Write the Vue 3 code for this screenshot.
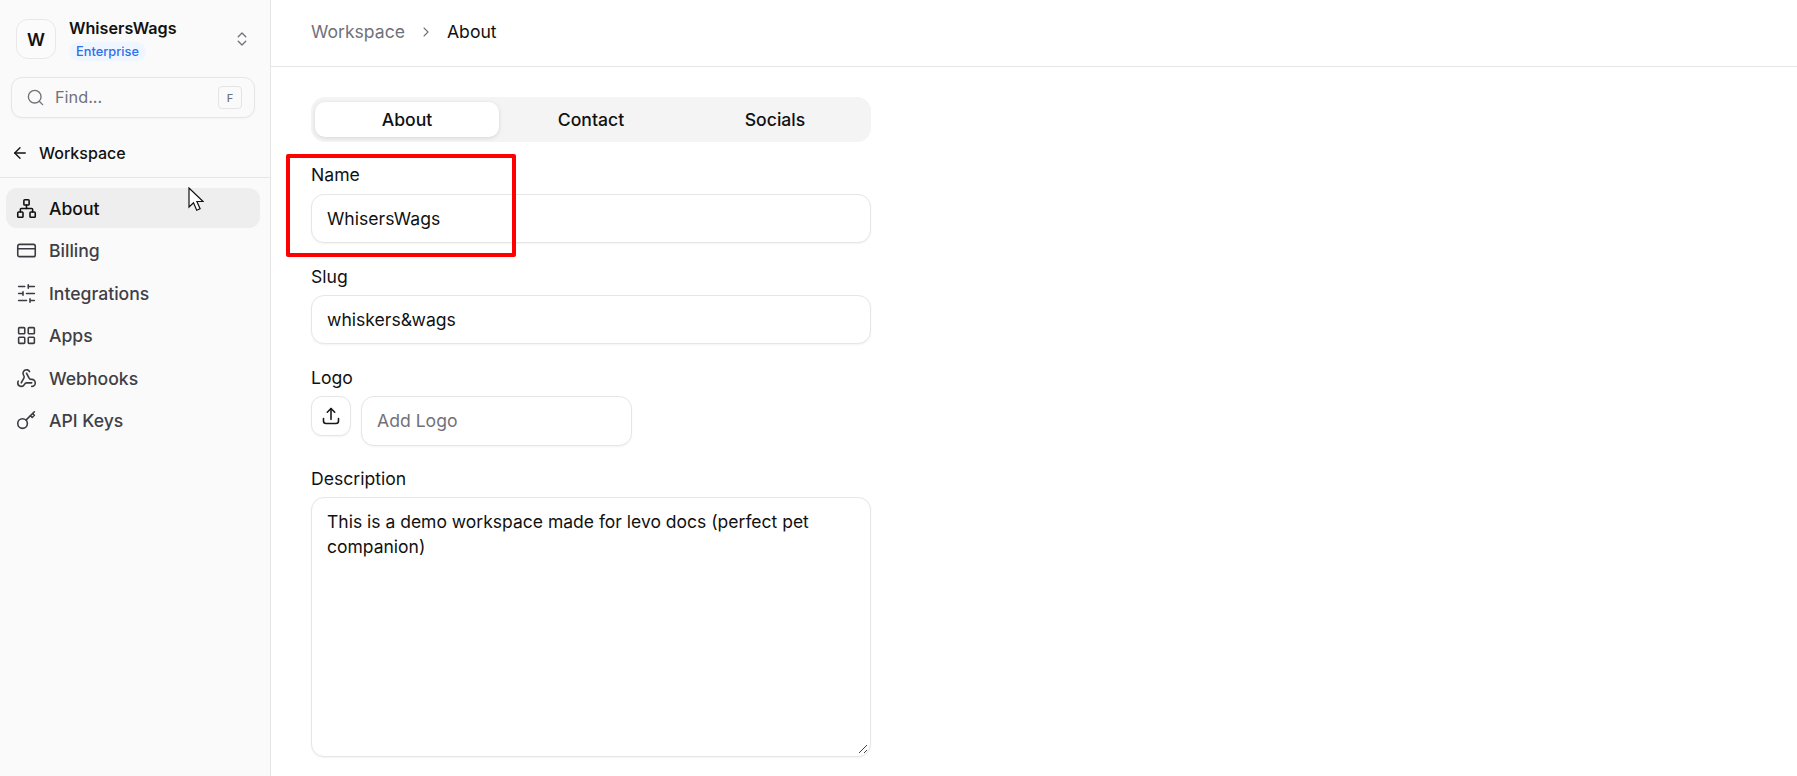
<script setup>
const nav = [
  { label: 'About', icon: 'network', active: true },
  { label: 'Billing', icon: 'card' },
  { label: 'Integrations', icon: 'sliders' },
  { label: 'Apps', icon: 'grid' },
  { label: 'Webhooks', icon: 'webhook' },
  { label: 'API Keys', icon: 'key' },
]
const tabs = ['About', 'Contact', 'Socials']
</script>

<template>
  <div class="app">
    <aside class="sidebar">
      <div class="account">
        <div class="avatar">W</div>
        <div class="account-text">
          <div class="account-name">WhisersWags</div>
          <span class="badge">Enterprise</span>
        </div>
        <svg class="updown" viewBox="0 0 24 24"><path d="m7 15 5 5 5-5" /><path d="m7 9 5-5 5 5" /></svg>
      </div>
      <div class="search">
        <svg class="search-icon" viewBox="0 0 24 24"><circle cx="11" cy="11" r="8" /><path d="m21 21-4.3-4.3" /></svg>
        <span class="search-text">Find...</span>
        <kbd class="kbd">F</kbd>
      </div>
      <div class="back">
        <svg class="back-icon" viewBox="0 0 24 24"><path d="m12 19-7-7 7-7" /><path d="M19 12H5" /></svg>
        <span>Workspace</span>
      </div>
      <nav class="nav">
        <div v-for="item in nav" :key="item.label" class="nav-item" :class="{ active: item.active }">
          <svg class="nav-icon" viewBox="0 0 24 24">
            <template v-if="item.icon === 'network'">
              <rect x="16" y="16" width="6" height="6" rx="1" /><rect x="2" y="16" width="6" height="6" rx="1" /><rect x="9" y="2" width="6" height="6" rx="1" />
              <path d="M5 16v-3a1 1 0 0 1 1-1h12a1 1 0 0 1 1 1v3" /><path d="M12 12V8" />
            </template>
            <template v-else-if="item.icon === 'card'">
              <rect x="2" y="5" width="20" height="14" rx="2" /><path d="M2 10h20" />
            </template>
            <template v-else-if="item.icon === 'sliders'">
              <path d="M21 4h-7M10 4H3M21 12h-9M8 12H3M21 20h-5M12 20H3M14 2v4M8 10v4M16 18v4" />
            </template>
            <template v-else-if="item.icon === 'grid'">
              <rect x="3" y="3" width="7" height="7" rx="1" /><rect x="14" y="3" width="7" height="7" rx="1" /><rect x="14" y="14" width="7" height="7" rx="1" /><rect x="3" y="14" width="7" height="7" rx="1" />
            </template>
            <template v-else-if="item.icon === 'webhook'">
              <path d="M18 16.98h-5.99c-1.1 0-1.95.94-2.48 1.9A4 4 0 0 1 2 17c.01-.7.2-1.4.57-2" /><path d="m6 17 3.13-5.78c.53-.97.1-2.18-.5-3.1a4 4 0 1 1 6.89-4.06" /><path d="m12 6 3.13 5.73C15.66 12.7 16.9 13 18 13a4 4 0 0 1 0 8" />
            </template>
            <template v-else>
              <path d="m16.5 6.5 2 2 2.5-2.5-2-2" /><path d="m21 2-9.6 9.6" /><circle cx="7.5" cy="15.5" r="5.5" />
            </template>
          </svg>
          <span>{{ item.label }}</span>
        </div>
      </nav>
    </aside>

    <main class="main">
      <header class="crumbs">
        <span class="crumb-muted">Workspace</span>
        <svg class="crumb-sep" viewBox="0 0 24 24"><path d="m9 18 6-6-6-6" /></svg>
        <span>About</span>
      </header>
      <div class="form">
        <div class="tabs">
          <div v-for="(t, i) in tabs" :key="t" class="tab" :class="{ selected: i === 0 }">{{ t }}</div>
        </div>
        <div class="field name-field">
          <div class="label">Name</div>
          <div class="input">WhisersWags</div>
        </div>
        <div class="field">
          <div class="label">Slug</div>
          <div class="input">whiskers&amp;wags</div>
        </div>
        <div class="field">
          <div class="label">Logo</div>
          <div class="logo-row">
            <div class="upload">
              <svg class="upload-icon" viewBox="0 0 24 24"><path d="M3 15v3a3 3 0 0 0 3 3h12a3 3 0 0 0 3-3v-3" /><path d="M16.5 7.5 12 3 7.5 7.5" /><path d="M12 3v13" /></svg>
            </div>
            <div class="input logo-input">Add Logo</div>
          </div>
        </div>
        <div class="field">
          <div class="label">Description</div>
          <div class="textarea">
            This is a demo workspace made for levo docs (perfect pet companion)
            <svg class="grip" viewBox="0 0 10 10"><path d="M1 9l8-8M6 9l3-3" /></svg>
          </div>
        </div>
      </div>
    </main>

    <div class="highlight"></div>
    <svg class="cursor" viewBox="0 0 16 25">
      <path d="M1 1v19l4.5-4.2 3.2 7.4 3.4-1.5-3.2-7.2h6.2z" />
    </svg>
  </div>
</template>

<style>
html, body { margin: 0; background: #fff; }
</style>

<style scoped>
.app {
  position: relative;
  display: flex;
  width: 1797px;
  height: 776px;
  overflow: hidden;
  font-family: Inter, "Liberation Sans", sans-serif;
  font-size: 17.6px;
  color: #11181c;
  background: #fff;
}
svg { fill: none; stroke: currentColor; stroke-width: 2; stroke-linecap: round; stroke-linejoin: round; flex: none; }

.sidebar {
  box-sizing: border-box;
  width: 271px;
  flex: none;
  background: #fafafa;
  border-right: 1px solid #e6e6e6;
  display: flex;
  flex-direction: column;
}
.account { display: flex; align-items: center; padding: 19px 16px 0; height: 40px; }
.avatar {
  box-sizing: border-box;
  width: 40px; height: 40px;
  border: 1px solid #e8e8e8; border-radius: 12px; background: #fbfbfb;
  display: flex; align-items: center; justify-content: center;
  font-weight: 600; font-size: 17.6px; color: #111;
}
.account-text { margin-left: 13px; flex: 1; display: flex; flex-direction: column; align-items: flex-start; }
.account-name { font-size: 16.15px; font-weight: 600; line-height: 20px; margin-top: 1px; color: #111; }
.badge {
  margin-top: 4px; padding: 0 7px; height: 19px; line-height: 19px;
  border-radius: 10px; background: #f0f6ff; color: #2f6fed; font-size: 12.8px; font-weight: 500;
}
.updown { width: 18px; height: 18px; color: #71717a; margin-right: 3px; stroke-width: 1.8; }
.search {
  box-sizing: border-box;
  margin: 18px 15px 0 11px; height: 41px; padding: 0 12px 0 14px;
  display: flex; align-items: center;
  border: 1px solid #e6e6e6; border-radius: 11px; background: #fafafa;
  box-shadow: 0 1px 2px rgba(0,0,0,.03);
}
.search-icon { width: 19px; height: 19px; color: #71717a; stroke-width: 1.7; }
.search-text { margin-left: 10px; flex: 1; color: #71717a; font-size: 16.3px; line-height: 20px; margin-top: -1px; }
.kbd {
  box-sizing: border-box;
  width: 24px; height: 23px; display: flex; align-items: center; justify-content: center;
  border: 1px solid #e4e4e7; border-radius: 4px; font-family: Inter, sans-serif; font-size: 11px; color: #71717a; font-weight: 500;
}
.back { box-sizing: border-box; display: flex; align-items: center; height: 54px; margin-top: 6px; padding: 4px 0 0 11px; border-bottom: 1px solid #e6e6e6; font-size: 16px; font-weight: 500; gap: 10px; color: #111; }
.back-icon { width: 18px; height: 18px; stroke-width: 1.8; }
.nav { display: flex; flex-direction: column; padding: 10px 10px 0 6px; gap: 2.6px; }
.nav-item {
  display: flex; align-items: center; height: 40px; border-radius: 11px;
  padding-left: 10px; gap: 12px; color: #3f3f46; font-weight: 500; font-size: 17.6px;
}
.nav-item.active { background: #eeeeee; color: #111; }
.nav-icon { width: 21px; height: 21px; stroke-width: 1.8; color: #3a3a40; }
.nav-item.active .nav-icon { color: #111; }

.main { flex: 1; min-width: 0; }
.crumbs {
  box-sizing: border-box;
  height: 67px; border-bottom: 1px solid #e6e6e6;
  display: flex; align-items: center; padding: 0 0 3px 40px; font-size: 17.6px; color: #111;
}
.crumb-muted { color: #71717a; }
.crumb-sep { width: 16px; height: 16px; color: #71717a; margin: 0 13px; stroke-width: 1.6; }
.form { box-sizing: border-box; width: 560px; margin: 30px 0 0 40px; display: flex; flex-direction: column; }
.tabs {
  box-sizing: border-box; height: 45px; padding: 5px 4px; background: #f4f4f5; border-radius: 14px;
  display: grid; grid-template-columns: repeat(3, 1fr); 
}
.tab { display: flex; align-items: center; justify-content: center; font-weight: 500; border-radius: 10px; color: #111; }
.tab.selected { background: #fff; box-shadow: 0 1px 4px rgba(0,0,0,.13); }
.field { margin-top: 22.5px; }
.name-field { margin-top: 21.5px; }
.name-field .label { margin-bottom: 8px; }
.label { line-height: 22px; height: 22px; margin-bottom: 7px; color: #111; }
.input {
  box-sizing: border-box; height: 49.5px; padding: 0 15px; display: flex; align-items: center;
  background: #fff; border: 1px solid #e6e6e6; border-radius: 13px;
  box-shadow: 0 1px 2px rgba(0,0,0,.05); color: #111;
}
.logo-row { display: flex; align-items: flex-start; gap: 10px; }
.upload {
  box-sizing: border-box; width: 40px; height: 40px; display: flex; align-items: center; justify-content: center;
  border: 1px solid #e6e6e6; border-radius: 11px; background: #fff;
  box-shadow: 0 1px 2px rgba(0,0,0,.05);
}
.upload-icon { width: 20px; height: 20px; color: #18181b; stroke-width: 1.9; }
.logo-input { width: 271px; height: 50px; color: #71717a; }
.textarea {
  position: relative;
  box-sizing: border-box; height: 260px; padding: 11px 15px;
  background: #fff; border: 1px solid #e6e6e6; border-radius: 13px; line-height: 25px; font-size: 17.5px;
  box-shadow: 0 1px 2px rgba(0,0,0,.05); color: #111;
}
.grip { position: absolute; right: 2px; bottom: 2px; width: 10px; height: 10px; stroke-width: 1; color: #444; stroke-linecap: butt; }

.highlight {
  position: absolute; left: 286px; top: 154px; width: 230px; height: 103px;
  box-sizing: border-box; border: 4px solid #ff0000; border-radius: 2px;
}
.cursor {
  position: absolute; left: 188px; top: 187px; width: 16px; height: 25px;
  fill: #fff; stroke: #111; stroke-width: 1.2; stroke-linejoin: miter;
}
</style>
